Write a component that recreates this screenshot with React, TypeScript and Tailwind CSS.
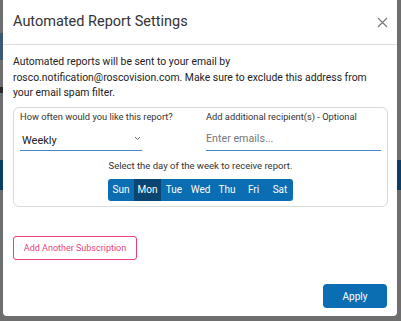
import React from "react";

export default function App() {
  const days = ["Sun", "Mon", "Tue", "Wed", "Thu", "Fri", "Sat"];
  return (
    <div
      className="relative w-[401px] h-[321px] overflow-hidden bg-[#6e6e6e] pl-[3px] pr-[4px] pb-[5px]"
      style={{ fontFamily: "Roboto, 'Liberation Sans', sans-serif" }}
    >
      <div className="absolute left-0 top-[33px] w-[3px] h-[27px] bg-[#3d5a72]" />
      <div className="absolute left-0 top-[87px] w-[3px] h-[6px] bg-[#2a2a2a]" />
      <div className="absolute left-0 top-[160px] w-[3px] h-[30px] bg-[#0d3d63]" />
      <div className="absolute right-0 top-[160px] w-[4px] h-[30px] bg-[#0d3d63]" />
      <div className="relative flex flex-col h-full bg-white rounded-b-[4px]">
        <div className="flex items-center justify-between h-[45px] pl-[10px] pr-[9px] border-b border-[#dcdcdc]">
          <div className="text-[14.5px] text-[#333] leading-none">Automated Report Settings</div>
          <svg width="11" height="11" viewBox="0 0 11 11">
            <path d="M1 1L10 10M10 1L1 10" stroke="#777" strokeWidth="1.1" />
          </svg>
        </div>
        <div className="pl-[10px] pr-[9px] pt-[9px]">
          <p className="text-[10.4px] leading-[15.5px] text-[#222]">
            Automated reports will be sent to your email by rosco.notification@roscovision.com. Make sure to exclude this address from your email spam filter.
          </p>
          <div className="mt-[6px] border border-[#dadada] rounded-[6px] h-[100px] px-[6px] pt-[2px]">
            <div className="flex gap-[64px]">
              <div className="w-[122px]">
                <div className="text-[9.3px] leading-[14px] text-[#333] whitespace-nowrap">How often would you like this report?</div>
                <div className="mt-[7px] flex items-center justify-between h-[20px] border-b-[1.5px] border-[#4a86c5] pl-[2px] pr-[1px]">
                  <span className="text-[11px] text-[#222] leading-none">Weekly</span>
                  <svg width="7" height="5" viewBox="0 0 7 5" className="mb-[3px]">
                    <path d="M1 1L3.5 3.5L6 1" stroke="#666" strokeWidth="1" fill="none" />
                  </svg>
                </div>
              </div>
              <div className="flex-1">
                <div className="text-[9.3px] leading-[14px] text-[#333] whitespace-nowrap">Add additional recipient(s) - Optional</div>
                <div className="mt-[7px] flex items-center h-[20px] border-b-[1.5px] border-[#4a86c5]">
                  <span className="text-[10.7px] text-[#777] leading-none mb-[2px]">Enter emails...</span>
                </div>
              </div>
            </div>
            <div className="mt-[8px] text-center text-[9.5px] leading-[14px] text-[#333]">
              Select the day of the week to receive report.
            </div>
            <div className="mt-[6px] flex justify-center">
              <div className="flex rounded-[3px] overflow-hidden bg-[#0b6db2]">
                {days.map((d) => (
                  <div
                    key={d}
                    className={
                      "w-[26.5px] h-[22px] flex items-center justify-center text-[10px] text-white " +
                      (d === "Mon" ? "bg-[#0a4671]" : "")
                    }
                  >
                    {d}
                  </div>
                ))}
              </div>
            </div>
          </div>
          <div className="mt-[27px]">
            <div className="inline-flex items-center justify-center w-[124px] h-[24px] border-[1.5px] border-[#e63f80] rounded-[3px] text-[9px] text-[#e63f80]">
              Add Another Subscription
            </div>
          </div>
        </div>
        <div className="flex justify-end pr-[10px] mt-[24px]">
          <div className="flex items-center justify-center w-[64px] h-[24px] bg-[#0b6db2] rounded-[4px] text-white text-[10px]">
            Apply
          </div>
        </div>
      </div>
    </div>
  );
}
